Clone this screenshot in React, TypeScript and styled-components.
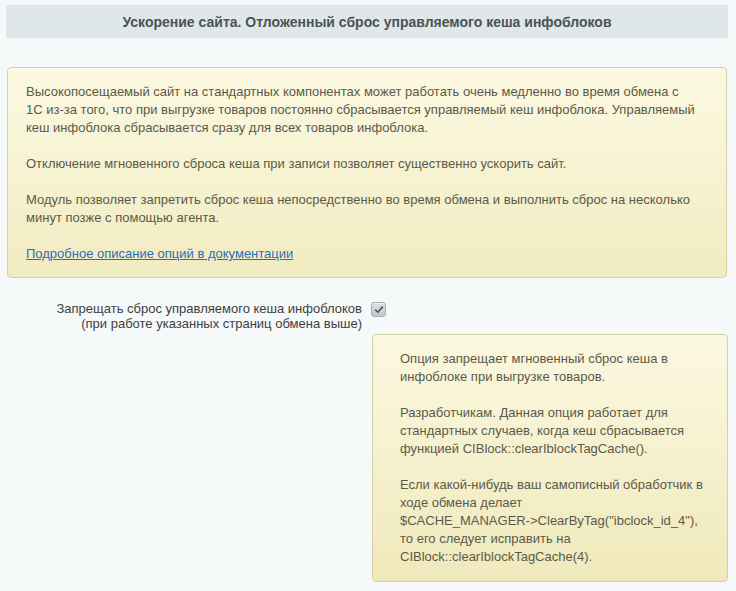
import React from 'react';
import styled, { createGlobalStyle } from 'styled-components';

const GlobalStyle = createGlobalStyle`
  html, body {
    margin: 0;
    padding: 0;
    background: #f5f9f9;
  }
  body {
    font-family: 'Liberation Sans', Arial, sans-serif;
    font-size: 13px;
    color: #5a5a4a;
  }
`;

const Page = styled.div`
  padding: 5px 9px 12px 7px;
`;

const Header = styled.div`
  height: 33px;
  margin: 0 -1px;
  background: #e0e7e9;
  display: flex;
  align-items: center;
  justify-content: center;

  h2 {
    margin: 0;
    font-size: 14px;
    font-weight: bold;
    color: #4b5356;
  }
`;

const Notice = styled.div`
  margin-top: 29px;
  border: 1px solid #d6d1a3;
  border-radius: 4px;
  background: linear-gradient(to bottom, #fcf9e2 0%, #f1ebc1 100%);
  padding: 15px 18px 14px;
  line-height: 18px;
  color: #5b5a49;

  a {
    color: #2c6db8;
    text-decoration: underline;
  }
`;

const OptionRow = styled.div`
  margin-top: 24px;
  display: grid;
  grid-template-columns: 1fr 1fr;
`;

const Label = styled.label`
  text-align: right;
  padding-right: 5px;
  line-height: 14.5px;
  color: #3f3f3f;
`;

const Field = styled.div`
  display: flex;
  flex-direction: column;
  align-items: flex-start;
`;

const CheckBox = styled.span<{ checked: boolean }>`
  margin-left: 4px;
  width: 13px;
  height: 13px;
  border: 1px solid #a7adb0;
  border-radius: 3px;
  background: linear-gradient(to bottom, #dde1e2, #c3c9cb);
  box-shadow: inset 0 1px 0 #eef0f1;
  display: flex;
  align-items: center;
  justify-content: center;

  svg {
    display: ${(p) => (p.checked ? 'block' : 'none')};
  }
`;

const Hint = styled.div`
  align-self: stretch;
  margin: 17px -1px 0 5px;
  border: 1px solid #d6d1a3;
  border-radius: 4px;
  background: linear-gradient(to bottom, #fbf8e0 0%, #f0e9bc 100%);
  padding: 15px 20px 15px 27px;
  line-height: 18px;
  color: #5b5a49;
`;

export default function App() {
  return (
    <>
      <GlobalStyle />
      <Page>
        <Header>
          <h2>Ускорение сайта. Отложенный сброс управляемого кеша инфоблоков</h2>
        </Header>

        <Notice>
          Высокопосещаемый сайт на стандартных компонентах может работать очень медленно во время обмена с<br />
          1С из-за того, что при выгрузке товаров постоянно сбрасывается управляемый кеш инфоблока. Управляемый<br />
          кеш инфоблока сбрасывается сразу для всех товаров инфоблока.
          <br />
          <br />
          Отключение мгновенного сброса кеша при записи позволяет существенно ускорить сайт.
          <br />
          <br />
          Модуль позволяет запретить сброс кеша непосредственно во время обмена и выполнить сброс на несколько<br />
          минут позже с помощью агента.
          <br />
          <br />
          <a href="#">Подробное описание опций в документации</a>
        </Notice>

        <OptionRow>
          <Label>
            Запрещать сброс управляемого кеша инфоблоков
            <br />
            (при работе указанных страниц обмена выше)
          </Label>
          <Field>
            <CheckBox checked>
              <svg width="10" height="9" viewBox="0 0 10 9">
                <path d="M1.2 4.6 L3.8 7.2 L8.8 1.6" fill="none" stroke="#4e5558" strokeWidth="1.6" />
              </svg>
            </CheckBox>
            <Hint>
              Опция запрещает мгновенный сброс кеша в<br />
              инфоблоке при выгрузке товаров.
              <br />
              <br />
              Разработчикам. Данная опция работает для<br />
              стандартных случаев, когда кеш сбрасывается<br />
              функцией CIBlock::clearIblockTagCache().
              <br />
              <br />
              Если какой-нибудь ваш самописный обработчик в<br />
              ходе обмена делает<br />
              $CACHE_MANAGER-&gt;ClearByTag("ibclock_id_4"),<br />
              то его следует исправить на<br />
              CIBlock::clearIblockTagCache(4).
            </Hint>
          </Field>
        </OptionRow>
      </Page>
    </>
  );
}
